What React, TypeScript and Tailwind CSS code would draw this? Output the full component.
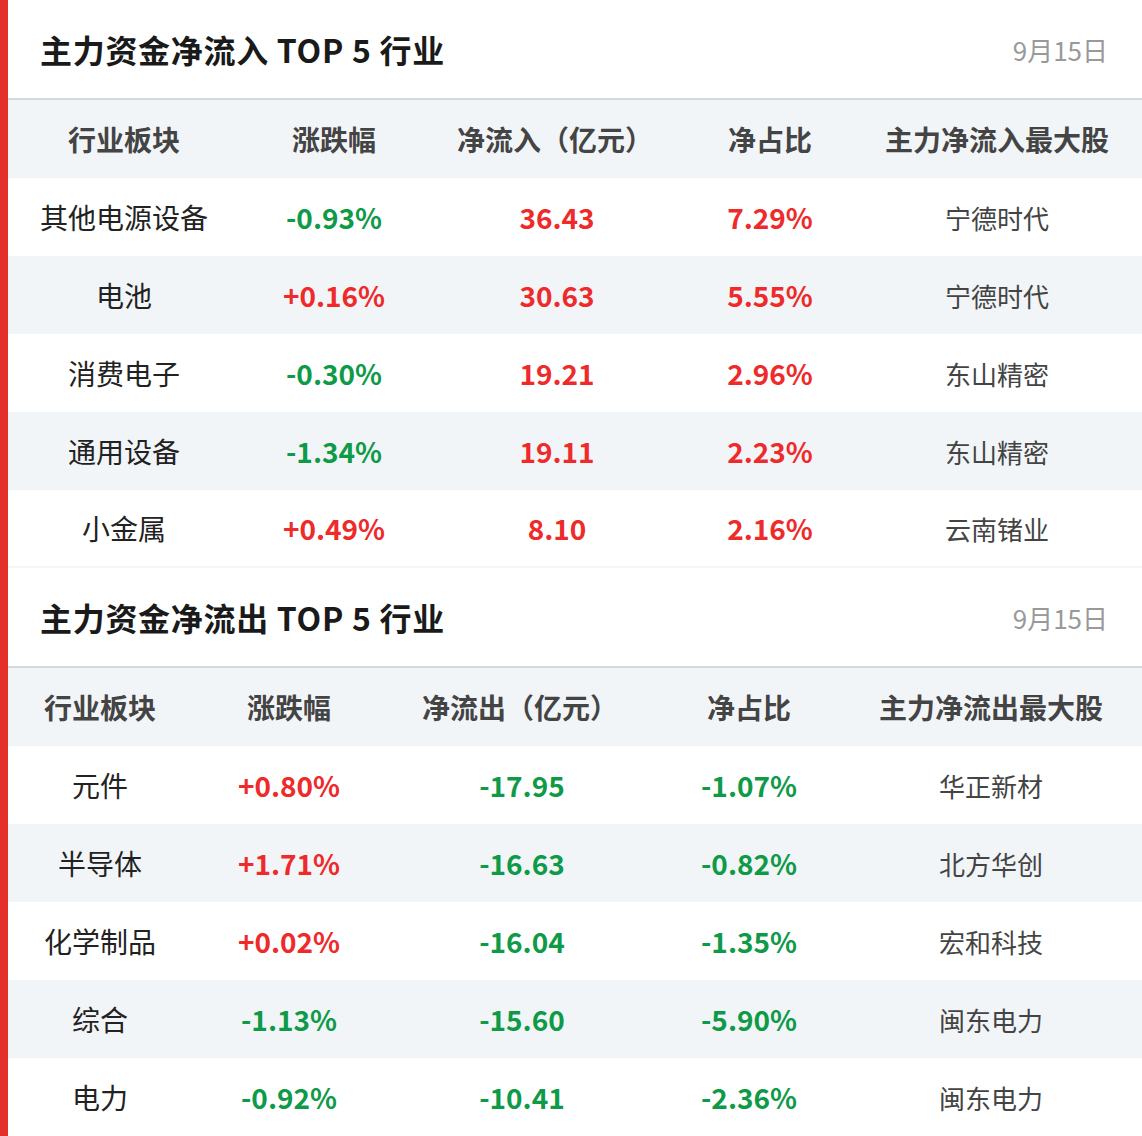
const FONT = "font-['Microsoft_YaHei','Noto_Sans_CJK_SC','Noto_Sans',sans-serif]";

type Row = {
    name: string;
    change: string;
    flow: string;
    ratio: string;
    stock: string;
};

const INFLOW: Row[] = [
    { name: "其他电源设备", change: "-0.93%", flow: "36.43", ratio: "7.29%", stock: "宁德时代" },
    { name: "电池", change: "+0.16%", flow: "30.63", ratio: "5.55%", stock: "宁德时代" },
    { name: "消费电子", change: "-0.30%", flow: "19.21", ratio: "2.96%", stock: "东山精密" },
    { name: "通用设备", change: "-1.34%", flow: "19.11", ratio: "2.23%", stock: "东山精密" },
    { name: "小金属", change: "+0.49%", flow: "8.10", ratio: "2.16%", stock: "云南锗业" },
];

const OUTFLOW: Row[] = [
    { name: "元件", change: "+0.80%", flow: "-17.95", ratio: "-1.07%", stock: "华正新材" },
    { name: "半导体", change: "+1.71%", flow: "-16.63", ratio: "-0.82%", stock: "北方华创" },
    { name: "化学制品", change: "+0.02%", flow: "-16.04", ratio: "-1.35%", stock: "宏和科技" },
    { name: "综合", change: "-1.13%", flow: "-15.60", ratio: "-5.90%", stock: "闽东电力" },
    { name: "电力", change: "-0.92%", flow: "-10.41", ratio: "-2.36%", stock: "闽东电力" },
];

function tone(v: string) {
    return v.startsWith("-") ? "text-[#0e9a47]" : "text-[#ee2a2a]";
}

function Section({
    title,
    flowLabel,
    stockLabel,
    rows,
    cols,
    divider,
}: {
    title: string;
    flowLabel: string;
    stockLabel: string;
    rows: Row[];
    cols: string;
    divider?: boolean;
}) {
    return (
        <section>
            <div className="flex h-[98px] items-center justify-between pl-8 pr-[34px]">
                <h2 className="text-[32px] font-bold tracking-[0.7px] text-[#1a1a1a]">
                    {title}
                </h2>
                <span className="text-[26px] text-[#999999]">9月15日</span>
            </div>
            <div className="border-t-2 border-[#d4d8de]">
                <div
                    className={`grid h-[78px] items-center bg-[#f2f5f8] text-center text-[28px] font-bold text-[#444444] ${cols}`}
                >
                    <div>行业板块</div>
                    <div>涨跌幅</div>
                    <div className="pl-3">{flowLabel}</div>
                    <div>净占比</div>
                    <div>{stockLabel}</div>
                </div>
                {rows.map((r, i) => (
                    <div
                        key={r.name}
                        className={`grid h-[78px] items-center text-center text-[28px] ${cols} ${
                            i % 2 === 1 ? "bg-[#f2f5f8]" : "bg-white"
                        } ${divider && i === rows.length - 1 ? "border-b-2 border-[#f5f5f5]" : ""}`}
                    >
                        <div className="text-[#222222]">{r.name}</div>
                        <div className={`font-bold ${tone(r.change)}`}>{r.change}</div>
                        <div className={`pl-4 font-bold ${tone(r.flow)}`}>{r.flow}</div>
                        <div className={`font-bold ${tone(r.ratio)}`}>{r.ratio}</div>
                        <div className="text-[26px] text-[#444444]">{r.stock}</div>
                    </div>
                ))}
            </div>
        </section>
    );
}

export default function App() {
    return (
        <div className={`flex min-h-[1136px] w-[1142px] bg-white ${FONT}`}>
            <div className="w-2 shrink-0 bg-[#e3302a]" />
            <div className="flex min-w-0 flex-1 flex-col">
                <Section
                    title="主力资金净流入 TOP 5 行业"
                    flowLabel="净流入（亿元）"
                    stockLabel="主力净流入最大股"
                    rows={INFLOW}
                    cols="grid-cols-[232px_188px_242px_200px_1fr] [&>div:last-child]:pr-[18px]"
                    divider
                />
                <Section
                    title="主力资金净流出 TOP 5 行业"
                    flowLabel="净流出（亿元）"
                    stockLabel="主力净流出最大股"
                    rows={OUTFLOW}
                    cols="grid-cols-[184px_194px_256px_214px_1fr] [&>div:last-child]:pr-[16px]"
                />
            </div>
        </div>
    );
}
